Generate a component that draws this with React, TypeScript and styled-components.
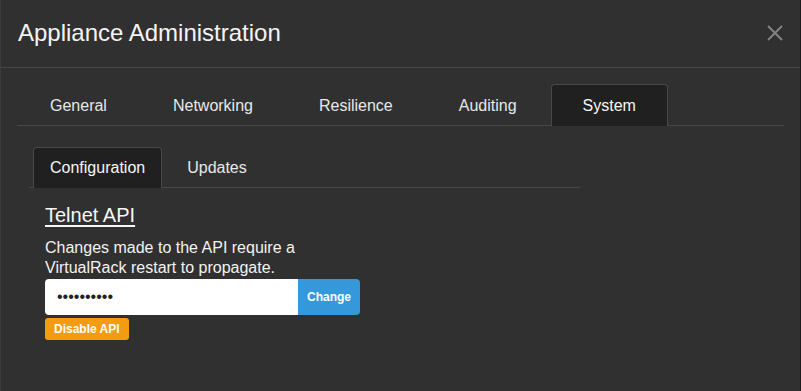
import React, { useState } from "react";
import styled, { createGlobalStyle } from "styled-components";

const GlobalStyle = createGlobalStyle`
  html, body { margin: 0; padding: 0; background: #1c1c1c; }
  body { font-family: "Liberation Sans", Arial, sans-serif; }
  * { box-sizing: border-box; }
`;

const Modal = styled.div`
  width: 800px;
  min-height: 391px;
  background: #303030;
  border-left: 1px solid #3c3c3c;
  color: #f2f2f2;
`;

const Header = styled.div`
  height: 68px;
  border-bottom: 1px solid #464646;
  display: flex;
  align-items: center;
  justify-content: space-between;
  padding: 0 17px 2px 17px;
`;

const Title = styled.h4`
  margin: 0;
  font-size: 24px;
  font-weight: 400;
  line-height: 28px;
  color: #f4f4f4;
`;

const CloseButton = styled.button`
  background: none;
  border: none;
  padding: 0;
  width: 16px;
  height: 16px;
  cursor: pointer;
  display: flex;
`;

const Body = styled.div`
  padding: 16px 16px 0 16px;
`;

const TabList = styled.div<{ $sub?: boolean }>`
  display: flex;
  border-bottom: 1px solid #474747;
  padding-left: ${(p) => (p.$sub ? "4px" : "1px")};
`;

const Tab = styled.div<{ $active?: boolean; $sub?: boolean }>`
  height: ${(p) => (p.$sub ? "41px" : "42px")};
  margin-bottom: -1px;
  margin-right: ${(p) => (p.$sub ? "8px" : "2px")};
  padding: 0 ${(p) => (p.$sub ? "16px" : "31px")};
  display: flex;
  align-items: center;
  font-size: 16px;
  color: ${(p) => (p.$active ? "#f6f6f6" : "#e8e8e8")};
  border: 1px solid ${(p) => (p.$active ? "#484848" : "transparent")};
  border-bottom: none;
  border-radius: 4px 4px 0 0;
  background: ${(p) => (p.$active ? "#202020" : "transparent")};
  cursor: pointer;
`;

const Panel = styled.div`
  width: 551px;
  margin: 21px 0 0 12px;
`;

const Content = styled.div`
  padding: 15px 16px 0 16px;
`;

const Heading = styled.h3`
  margin: 0;
  font-size: 20px;
  line-height: 24px;
  font-weight: 400;
  text-decoration: underline;
  text-underline-offset: 3px;
  color: #f6f6f6;
`;

const Text = styled.p`
  margin: 11px 0 0 0;
  font-size: 16px;
  line-height: 20px;
  color: #f2f2f2;
`;

const InputGroup = styled.div`
  display: flex;
  width: 315px;
  height: 36px;
  margin-top: 1px;
`;

const Field = styled.input`
  flex: 1;
  min-width: 0;
  height: 36px;
  border: none;
  border-radius: 4px 0 0 4px;
  background: #ffffff;
  padding: 0 12px;
  font-family: "Liberation Sans", Arial, sans-serif;
  font-size: 16px;
  color: #222;
  outline: none;
`;

const Btn = styled.button<{ $variant: "primary" | "warning" }>`
  border: none;
  font-family: "Liberation Sans", Arial, sans-serif;
  font-weight: 700;
  font-size: 12px;
  color: #ffffff;
  cursor: pointer;
  background: ${(p) => (p.$variant === "primary" ? "#3498db" : "#f39c12")};
  padding: 0 9px;
  height: ${(p) => (p.$variant === "primary" ? "36px" : "22px")};
  border-radius: ${(p) => (p.$variant === "primary" ? "0 4px 4px 0" : "3px")};
`;

const ButtonRow = styled.div`
  margin-top: 3px;
  display: flex;
`;

const mainTabs = ["General", "Networking", "Resilience", "Auditing", "System"];
const subTabs = ["Configuration", "Updates"];

export default function App() {
  const [tab, setTab] = useState("System");
  const [sub, setSub] = useState("Configuration");
  return (
    <>
      <GlobalStyle />
      <Modal>
        <Header>
          <Title>Appliance Administration</Title>
          <CloseButton aria-label="Close">
            <svg width="16" height="16" viewBox="0 0 16 16">
              <path d="M1 1 L15 15 M15 1 L1 15" stroke="#858585" strokeWidth="1.8" />
            </svg>
          </CloseButton>
        </Header>
        <Body>
          <TabList>
            {mainTabs.map((t) => (
              <Tab key={t} $active={t === tab} onClick={() => setTab(t)}>
                {t}
              </Tab>
            ))}
          </TabList>
          <Panel>
            <TabList $sub>
              {subTabs.map((t) => (
                <Tab key={t} $sub $active={t === sub} onClick={() => setSub(t)}>
                  {t}
                </Tab>
              ))}
            </TabList>
            <Content>
              <Heading>Telnet API</Heading>
              <Text>
                Changes made to the API require a
                <br />
                VirtualRack restart to propagate.
              </Text>
              <InputGroup>
                <Field type="password" defaultValue="abcdefghij" />
                <Btn $variant="primary">Change</Btn>
              </InputGroup>
              <ButtonRow>
                <Btn $variant="warning">Disable API</Btn>
              </ButtonRow>
            </Content>
          </Panel>
        </Body>
      </Modal>
    </>
  );
}
